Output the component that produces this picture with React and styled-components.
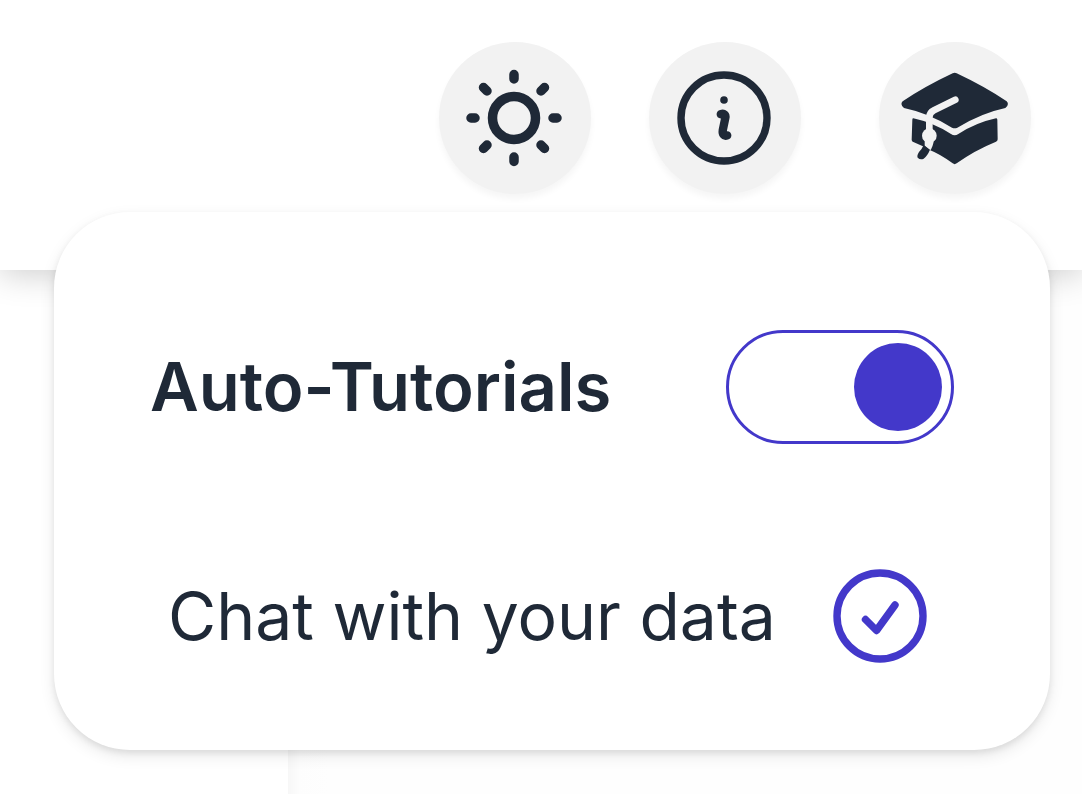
import React, { useState } from "react";
import styled, { createGlobalStyle } from "styled-components";

const ink = "#1f2937";
const primary = "#4338ca";
const surface = "#f2f2f2";

const GlobalStyle = createGlobalStyle`
  body {
    margin: 0;
    background-color: #ffffff;
    color: ${ink};
    font-family: Inter, "Liberation Sans", sans-serif;
  }
`;

const Page = styled.div`
  min-height: 100vh;
  display: flex;
  flex-direction: column;
`;

const Header = styled.header`
  position: relative;
  z-index: 1;
  display: flex;
  justify-content: flex-end;
  align-items: flex-start;
  box-sizing: border-box;
  height: 270px;
  padding: 42px 51px 0;
  background-color: #ffffff;
  box-shadow: 0 4px 32px rgba(0, 0, 0, 0.2);
`;

const Group = styled.div`
  display: flex;
  gap: 58px;
  margin-right: 78px;
`;

const RoundButton = styled.button`
  display: flex;
  align-items: center;
  justify-content: center;
  width: 152px;
  height: 152px;
  padding: 0;
  border: none;
  border-radius: 50%;
  background-color: ${surface};
  color: ${ink};
  cursor: pointer;
  box-shadow: 0 5px 6px rgba(0, 0, 0, 0.04);
`;

const Dropdown = styled.section`
  position: absolute;
  top: 212px;
  right: 32px;
  left: 54px;
  display: flex;
  flex-direction: column;
  gap: 125px;
  padding: 118px 96px 87px;
  border-radius: 76px;
  background-color: #ffffff;
  box-shadow: 0 6px 16px rgba(0, 0, 0, 0.09), 0 3px 6px rgba(0, 0, 0, 0.08);
`;

const ToggleRow = styled.label`
  display: flex;
  align-items: center;
  justify-content: space-between;
  font-size: 67px;
  line-height: 80px;
  font-weight: 600;
  cursor: pointer;
`;

const Toggle = styled.input`
  appearance: none;
  display: flex;
  align-items: center;
  justify-content: ${({ checked }) => (checked ? "flex-end" : "flex-start")};
  box-sizing: border-box;
  width: 228px;
  height: 114px;
  margin: 0;
  padding: 0 9px;
  border: 3px solid ${primary};
  border-radius: 57px;
  cursor: pointer;

  &::before {
    content: "";
    width: 88px;
    height: 88px;
    border-radius: 50%;
    background-color: ${primary};
  }
`;

const TutorialItem = styled.button`
  display: flex;
  align-items: center;
  justify-content: space-between;
  padding: 0 27px 0 18px;
  border: none;
  background: none;
  color: inherit;
  font-family: inherit;
  font-size: 66px;
  line-height: 80px;
  font-weight: 400;
  text-align: left;
  cursor: pointer;

  svg {
    color: ${primary};
  }
`;

const Body = styled.main`
  flex: 1;
  display: flex;
`;

const Sidebar = styled.aside`
  width: 288px;
`;

const Content = styled.section`
  flex: 1;
  background: linear-gradient(to right, #f7f7f7, #fdfdfd 12px, #fefefe 40px);
`;

const SunIcon = () => (
  <svg width="100" height="100" viewBox="-49 -50 100 100" fill="none" stroke="currentColor" strokeWidth="9.5" strokeLinecap="round">
    <circle r="21.5" />
    <path d="M0 -39V-43.5M0 39V43.5M-39 0H-43M39 0H43" />
    <path d="M-27 -27L-30.5 -30.5M27 -27L30.5 -30.5M-27 27L-30.5 30.5M27 27L30.5 30.5" />
  </svg>
);

const InfoIcon = () => (
  <svg width="100" height="100" viewBox="-49 -50 100 100" fill="none" stroke="currentColor" strokeWidth="7.4" strokeLinecap="round" strokeLinejoin="round">
    <circle r="43" />
    <path d="M-3.2 -3.8C0 -5 2 -3.4 1.3 0L-1.2 12C-1.8 16 0 18.6 3.2 17.4" strokeWidth="8.4" />
    <circle cy="-18" r="3.8" fill="currentColor" stroke="none" />
  </svg>
);

const CapIcon = () => (
  <svg width="108" height="100" viewBox="93 114 324 300" fill="currentColor">
    <path d="M248 130Q254 127 260 130Q345 170 410 214Q419 224 406 234Q335 249 262 293Q254 297 246 293Q175 249 102 234Q89 224 98 214Q163 170 248 130Z" />
    <path d="M130 265Q190 278 243 312Q254 320 265 312Q318 278 378 265Q382 265 382 269L383 328Q383 333 378 335Q312 362 260 400Q254 405 248 400Q210 372 179 360L169 353L130 336Q125 334 125 329L127 269Q127 265 130 265Z" />
    <path d="M256 209L192 241Q178 248 178 262V310" fill="none" stroke={surface} strokeWidth="20" strokeLinecap="round" />
    <circle cx="178" cy="317" r="22" fill={surface} />
    <path d="M164 328H192Q189 352 180 362L164 347Z" fill={surface} />
    <path d="M161 345L180 359Q172 378 161 386Q151 391 143 383Q140 377 147 366Q156 357 161 345Z" />
  </svg>
);

const CheckIcon = () => (
  <svg width="94" height="94" viewBox="-47 -47 94 94" fill="none" stroke="currentColor" strokeWidth="7.4" strokeLinecap="round" strokeLinejoin="round">
    <circle r="43" />
    <path d="M-14.5 3.5L-3.5 14.5L15 -11" />
  </svg>
);

const App = () => {
  const [autoTutorials, setAutoTutorials] = useState(true);

  return (
    <Page>
      <GlobalStyle />
      <Header>
        <Group>
          <RoundButton type="button" aria-label="Theme">
            <SunIcon />
          </RoundButton>
          <RoundButton type="button" aria-label="Information">
            <InfoIcon />
          </RoundButton>
        </Group>
        <RoundButton type="button" aria-label="Tutorials">
          <CapIcon />
        </RoundButton>
        <Dropdown>
          <ToggleRow>
            Auto-Tutorials
            <Toggle
              type="checkbox"
              checked={autoTutorials}
              onChange={(e) => setAutoTutorials(e.target.checked)}
            />
          </ToggleRow>
          <TutorialItem type="button">
            Chat with your data
            <CheckIcon />
          </TutorialItem>
        </Dropdown>
      </Header>
      <Body>
        <Sidebar />
        <Content />
      </Body>
    </Page>
  );
};

export default App;
